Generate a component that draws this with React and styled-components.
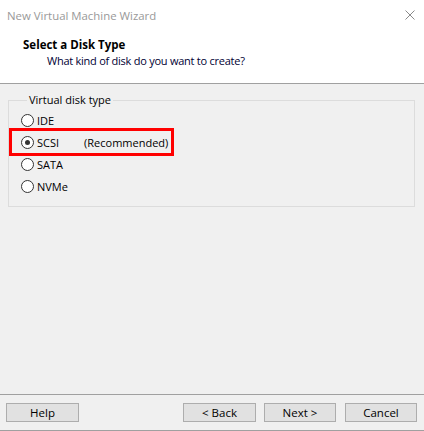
import React from "react";
import styled, { createGlobalStyle } from "styled-components";

const GlobalStyle = createGlobalStyle`
  html, body {
    margin: 0;
    padding: 0;
    background: #ffffff;
  }
  body {
    font-family: "Open Sans", "Noto Sans", Arial, sans-serif;
    font-size: 11px;
    color: #000;
  }
`;

// Fenêtre complète de l'assistant
const Window = styled.div`
  width: 424px;
  height: 431px;
  display: flex;
  flex-direction: column;
  background: #f0f0f0;
  overflow: hidden;
`;

const TitleBar = styled.div`
  height: 30px;
  display: flex;
  align-items: center;
  justify-content: space-between;
  padding: 0 9px 0 7px;
  background: #ffffff;
  color: #999999;
  font-size: 11.4px;
`;

const CloseIcon = styled.svg`
  width: 10px;
  height: 10px;
`;

const Header = styled.div`
  height: 54px;
  background: #ffffff;
  border-bottom: 1px solid #a0a0a0;
  padding: 7px 0 0 23px;
  box-sizing: border-box;
`;

const HeaderTitle = styled.div`
  font-weight: 700;
  font-size: 11.5px;
  line-height: 16px;
`;

const HeaderSubtitle = styled.div`
  margin-left: 24px;
  line-height: 16px;
  color: #000033;
  letter-spacing: -0.25px;
`;

const Content = styled.div`
  flex: 1;
  padding: 9px 9px 0 8px;
`;

const GroupBox = styled.fieldset`
  margin: 0;
  padding: 2px 12px 12px 12px;
  border: 1px solid #dcdcdc;
  height: 114px;
  box-sizing: border-box;
`;

const Legend = styled.legend`
  padding: 0 2px;
  margin-left: 6px;
  line-height: 14px;
`;

const Row = styled.div`
  display: flex;
  align-items: center;
  height: 22px;
`;

const Highlight = styled(Row)`
  box-sizing: border-box;
  width: 165px;
  height: 28px;
  margin: -3px 0 -3px -12px;
  padding-left: 9px;
  border: 3px solid #ff0000;
`;

const Radio = styled.span`
  width: 11px;
  height: 11px;
  border: 1px solid #333333;
  border-radius: 50%;
  background: #ffffff;
  display: flex;
  align-items: center;
  justify-content: center;
  margin-right: 3px;
  flex-shrink: 0;

  &::after {
    content: "";
    width: 5px;
    height: 5px;
    border-radius: 50%;
    background: ${(p) => (p.checked ? "#333333" : "transparent")};
  }
`;

const Note = styled.span`
  margin-left: 25px;
`;

const Footer = styled.div`
  height: 35px;
  border-top: 1px solid #a0a0a0;
  border-bottom: 1px solid #a0a0a0;
  display: flex;
  align-items: center;
  padding: 0 7px 0 6px;
  box-sizing: content-box;
`;

const Spacer = styled.div`
  flex: 1;
`;

const Button = styled.button`
  width: ${(p) => p.w || 73}px;
  height: 19px;
  padding: 0;
  margin-left: ${(p) => p.gap || 0}px;
  background: #e1e1e1;
  border: 1px solid #adadad;
  font-family: inherit;
  font-size: 11.5px;
  color: #000;
`;

const options = [
  { label: "IDE" },
  { label: "SCSI", note: "(Recommended)", checked: true },
  { label: "SATA" },
  { label: "NVMe" },
];

const App = () => {
  return (
    <>
      <GlobalStyle />
      <Window>
        <TitleBar>
          <span>New Virtual Machine Wizard</span>
          <CloseIcon viewBox="0 0 10 10">
            <path d="M0.5 0.5 L9.5 9.5 M9.5 0.5 L0.5 9.5" stroke="#8a8a8a" strokeWidth="1" />
          </CloseIcon>
        </TitleBar>

        <Header>
          <HeaderTitle>Select a Disk Type</HeaderTitle>
          <HeaderSubtitle>What kind of disk do you want to create?</HeaderSubtitle>
        </Header>

        <Content>
          <GroupBox>
            <Legend>Virtual disk type</Legend>
            {options.map((o) =>
              o.checked ? (
                <Highlight key={o.label}>
                  <Radio checked />
                  <span>{o.label}</span>
                  <Note>{o.note}</Note>
                </Highlight>
              ) : (
                <Row key={o.label}>
                  <Radio />
                  <span>{o.label}</span>
                </Row>
              )
            )}
          </GroupBox>
        </Content>

        <Footer>
          <Button>Help</Button>
          <Spacer />
          <Button>&lt; Back</Button>
          <Button gap={8} w={72}>Next &gt;</Button>
          <Button gap={9} w={72}>Cancel</Button>
        </Footer>
      </Window>
    </>
  );
};

export default App;
